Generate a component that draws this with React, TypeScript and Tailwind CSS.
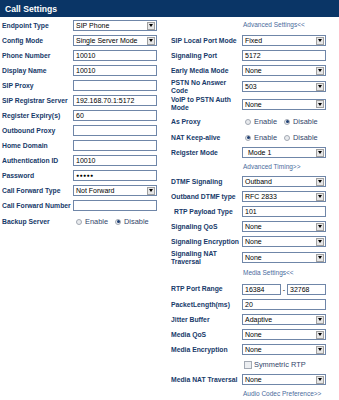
import React from 'react';

type Ctl =
  | { kind: 'text'; value: string; pw?: boolean }
  | { kind: 'select'; value: string; pad?: string }
  | { kind: 'radio'; enable: boolean }
  | { kind: 'range'; a: string; b: string }
  | { kind: 'check'; label: string }
  | { kind: 'link'; label: string };

type Row = { label?: React.ReactNode; h: string; ctl: Ctl; indent?: boolean };

const left: Row[] = [
  { label: 'Endpoint Type', h: 'h-[15px]', ctl: { kind: 'select', value: 'SIP Phone' } },
  { label: 'Config Mode', h: 'h-[15px]', ctl: { kind: 'select', value: 'Single Server Mode' } },
  { label: 'Phone Number', h: 'h-[15px]', ctl: { kind: 'text', value: '10010' } },
  { label: 'Display Name', h: 'h-[15px]', ctl: { kind: 'text', value: '10010' } },
  { label: 'SIP Proxy', h: 'h-[15px]', ctl: { kind: 'text', value: '' } },
  { label: 'SIP Registrar Server', h: 'h-[15px]', ctl: { kind: 'text', value: '192.168.70.1:5172' } },
  { label: 'Register Expiry(s)', h: 'h-[15px]', ctl: { kind: 'text', value: '60' } },
  { label: 'Outbound Proxy', h: 'h-[15px]', ctl: { kind: 'text', value: '' } },
  { label: 'Home Domain', h: 'h-[15px]', ctl: { kind: 'text', value: '' } },
  { label: 'Authentication ID', h: 'h-[15px]', ctl: { kind: 'text', value: '10010' } },
  { label: 'Password', h: 'h-[15px]', ctl: { kind: 'text', value: '●●●●●', pw: true } },
  { label: 'Call Forward Type', h: 'h-[15px]', ctl: { kind: 'select', value: 'Not Forward' } },
  { label: 'Call Forward Number', h: 'h-[15px]', ctl: { kind: 'text', value: '' } },
  { label: 'Backup Server', h: 'h-[17px]', ctl: { kind: 'radio', enable: false } },
];

const right: Row[] = [
  { h: 'h-[15px]', ctl: { kind: 'link', label: 'Advanced Settings<<' } },
  { label: 'SIP Local Port Mode', h: 'h-[15px]', ctl: { kind: 'select', value: 'Fixed' } },
  { label: 'Signaling Port', h: 'h-[15px]', ctl: { kind: 'text', value: '5172' } },
  { label: 'Early Media Mode', h: 'h-[15px]', ctl: { kind: 'select', value: 'None' } },
  { label: <>PSTN No Answer<br />Code</>, h: 'h-[17px]', ctl: { kind: 'select', value: '503' } },
  { label: <>VoIP to PSTN Auth<br />Mode</>, h: 'h-[18px]', ctl: { kind: 'select', value: 'None' } },
  { label: 'As Proxy', h: 'h-[17px]', ctl: { kind: 'radio', enable: false } },
  { label: 'NAT Keep-alive', h: 'h-[15px]', ctl: { kind: 'radio', enable: true } },
  { label: 'Reigster Mode', h: 'h-[15px]', ctl: { kind: 'select', value: 'Mode 1', pad: 'pl-[5px]' } },
  { h: 'h-[14px]', ctl: { kind: 'link', label: 'Advanced Timing>>' } },
  { label: 'DTMF Signaling', h: 'h-[15px]', ctl: { kind: 'select', value: 'Outband' } },
  { label: 'Outband DTMF type', h: 'h-[15px]', ctl: { kind: 'select', value: 'RFC 2833' } },
  { label: 'RTP Payload Type', h: 'h-[15px]', ctl: { kind: 'text', value: '101' }, indent: true },
  { label: 'Signaling QoS', h: 'h-[15px]', ctl: { kind: 'select', value: 'None' } },
  { label: 'Signaling Encryption', h: 'h-[15px]', ctl: { kind: 'select', value: 'None' } },
  { label: <>Signaling NAT<br />Traversal</>, h: 'h-[17px]', ctl: { kind: 'select', value: 'None' } },
  { h: 'h-[15px]', ctl: { kind: 'link', label: 'Media Settings<<' } },
  { label: 'RTP Port Range', h: 'h-[16px]', ctl: { kind: 'range', a: '16384', b: '32768' } },
  { label: 'PacketLength(ms)', h: 'h-[15px]', ctl: { kind: 'text', value: '20' } },
  { label: 'Jitter Buffer', h: 'h-[15px]', ctl: { kind: 'select', value: 'Adaptive' } },
  { label: 'Media QoS', h: 'h-[15px]', ctl: { kind: 'select', value: 'None' } },
  { label: 'Media Encryption', h: 'h-[15px]', ctl: { kind: 'select', value: 'None' } },
  { h: 'h-[15px]', ctl: { kind: 'check', label: 'Symmetric RTP' } },
  { label: 'Media NAT Traversal', h: 'h-[15px]', ctl: { kind: 'select', value: 'None' } },
  { h: 'h-[14px]', ctl: { kind: 'link', label: 'Audio Codec Preference>>' } },
];

function Radio({ on }: { on: boolean }) {
  return (
    <span className="flex h-[6px] w-[6px] items-center justify-center rounded-full border border-[#a3a9b3] bg-[#e9ebee]">
      {on && <span className="h-[3px] w-[3px] rounded-full bg-[#1f3f73]" />}
    </span>
  );
}

function Control({ ctl }: { ctl: Ctl }) {
  if (ctl.kind === 'text')
    return (
      <div className="flex h-[11px] w-[84px] items-center border border-[#6f86a8] bg-white pl-[2px] text-[7px] leading-none text-black">
        <span className={ctl.pw ? 'text-[5px] tracking-[0.5px]' : ''}>{ctl.value}</span>
      </div>
    );
  if (ctl.kind === 'select')
    return (
      <div className="flex h-[11px] w-[84px] items-center border border-[#6f86a8] bg-white">
        <span className={`flex-1 ${ctl.pad ?? 'pl-[2px]'} text-[7px] leading-none text-black`}>{ctl.value}</span>
        <span className="mr-[1px] flex h-[8px] w-[8px] items-center justify-center border border-[#a0a0a0] bg-[#e6e6e6]">
          <svg width="4" height="3" viewBox="0 0 4 3">
            <polygon points="0,0 4,0 2,3" fill="#000" />
          </svg>
        </span>
      </div>
    );
  if (ctl.kind === 'range')
    return (
      <div className="flex items-center">
        <div className="flex h-[11px] w-[39px] items-center border border-[#6f86a8] bg-white pl-[2px] text-[7px] leading-none text-black">{ctl.a}</div>
        <span className="w-[6px] text-center text-[7px] leading-none text-black">-</span>
        <div className="flex h-[11px] w-[39px] items-center border border-[#6f86a8] bg-white pl-[2px] text-[7px] leading-none text-black">{ctl.b}</div>
      </div>
    );
  if (ctl.kind === 'radio')
    return (
      <div className="flex items-center pl-[3px] text-[7.4px] leading-none text-[#33466a]">
        <Radio on={ctl.enable} />
        <span className="ml-[3px]">Enable</span>
        <span className="ml-[7px]"><Radio on={!ctl.enable} /></span>
        <span className="ml-[3px]">Disable</span>
      </div>
    );
  if (ctl.kind === 'check')
    return (
      <div className="flex items-center pl-[2px] text-[7.4px] leading-none text-[#33466a]">
        <span className="h-[8px] w-[8px] border border-[#a3a9b3] bg-[#eceef1]" />
        <span className="ml-[2px]">{ctl.label}</span>
      </div>
    );
  return <span className="pl-[1px] text-[6.5px] leading-none text-[#4a6b9c]">{ctl.label}</span>;
}

function Column({ rows }: { rows: Row[] }) {
  return (
    <div className="flex flex-col pt-[1px]">
      {rows.map((r, i) => (
        <div key={i} className={`flex items-center ${r.h}`}>
          <div className={`w-[71px] shrink-0 whitespace-nowrap text-[6.8px] font-bold leading-[8px] text-[#173a6a] ${r.indent ? 'pl-[3px]' : ''}`}>
            {r.label}
          </div>
          <Control ctl={r.ctl} />
        </div>
      ))}
    </div>
  );
}

export default function App() {
  return (
    <div className="w-full bg-white font-['Liberation_Sans',Arial,sans-serif]">
      <div className="flex h-[17px] items-center bg-[#0a3566] pl-[5px] pt-[1px] text-[8.6px] font-bold text-white">
        Call Settings
      </div>
      <div className="flex">
        <div className="w-[169px] shrink-0 pl-[2px]">
          <Column rows={left} />
        </div>
        <div className="pl-[2px]">
          <Column rows={right} />
        </div>
      </div>
    </div>
  );
}
